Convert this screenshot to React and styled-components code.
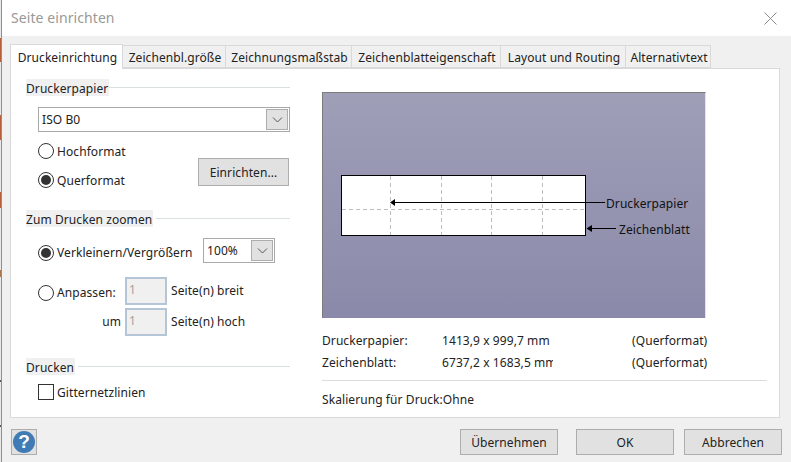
import React from 'react';
import styled, { createGlobalStyle } from 'styled-components';

const GlobalStyle = createGlobalStyle`
    html, body {
        margin: 0;
        padding: 0;
        width: 791px;
        height: 462px;
        overflow: hidden;
        background: #f0f0f0;
    }
    * {
        box-sizing: border-box;
    }
`;

const Screen = styled.div`
    display: flex;
    width: 791px;
    height: 462px;
    font-family: "Noto Sans", "Open Sans", sans-serif;
    font-size: 12px;
    line-height: 16px;
    letter-spacing: 0.08px;
    color: #222;
`;

// behind the dialog: what is left of the window underneath
const BackdropEdge = styled.div`
    width: 2px;
    flex: none;
    border-right: 1px solid #8f8f8f;
    background: linear-gradient(
        to bottom,
        #e8e8e8 0 38px, #b5603a 38px 62px, #e8e8e8 62px 115px, #b5603a 115px 140px,
        #e8e8e8 140px 192px, #b5603a 192px 208px, #e8e8e8 208px 270px, #a9764e 270px 277px,
        #e8e8e8 277px 380px, #555 380px 382px, #e8e8e8 382px 425px, #555 425px 427px, #e8e8e8 427px 462px
    );
`;

const Dialog = styled.div`
    flex: 1;
    display: flex;
    flex-direction: column;
    min-width: 0;
    background: #f0f0f0;
`;

const TitleBar = styled.div`
    height: 36px;
    flex: none;
    display: flex;
    align-items: center;
    justify-content: space-between;
    padding: 0 14px 0 9px;
    background: #fff;
    font-size: 14px;
    color: #999;
`;

const Body = styled.div`
    flex: 1;
    display: flex;
    flex-direction: column;
    padding: 8px 0 0 8px;
`;

const TabRow = styled.div`
    display: flex;
    align-items: flex-end;
    height: 25px;
    position: relative;
    z-index: 1;
`;

const Tab = styled.div`
    width: ${(props) => props.$width}px;
    height: ${(props) => (props.$active ? 25 : 23)}px;
    margin-bottom: ${(props) => (props.$active ? 0 : 1)}px;
    padding: ${(props) => (props.$active ? 1 : 3)}px 0 0 2px;
    display: flex;
    align-items: center;
    justify-content: center;
    white-space: nowrap;
    background: ${(props) => (props.$active ? '#fff' : '#f0f0f0')};
    border: 1px solid #d9d9d9;
    border-left: ${(props) => (props.$active ? '1px solid #d9d9d9' : 'none')};
    border-bottom: ${(props) => (props.$active ? 'none' : '1px solid #d9d9d9')};
    color: #222;
`;

const Panel = styled.div`
    width: 770px;
    height: 350px;
    margin-top: -1px;
    display: flex;
    background: #fff;
    border: 1px solid #d9d9d9;
`;

const LeftColumn = styled.div`
    width: 264px;
    margin-left: 15px;
    padding-top: 10px;
    flex: none;
`;

const RightColumn = styled.div`
    width: 445px;
    margin-left: 32px;
    padding-top: 23px;
    flex: none;
`;

const GroupHeading = styled.div`
    display: flex;
    align-items: center;
    gap: ${(props) => props.$gap ?? 3}px;
    height: 17px;
    margin-top: ${(props) => props.$top ?? 0}px;

    span {
        background: #f0f0f0;
        height: 17px;
        line-height: 19px;
        padding-right: 1px;
        white-space: nowrap;
    }

    &::after {
        content: '';
        flex: 1;
        height: 1px;
        background: #dadfe2;
    }
`;

const Group = styled.div`
    padding-left: 12px;
`;

const SelectBox = styled.div`
    display: flex;
    align-items: center;
    justify-content: space-between;
    width: ${(props) => props.$width}px;
    height: 25px;
    margin-top: ${(props) => props.$top ?? 0}px;
    padding: 1px 1px 1px 3px;
    background: #fff;
    border: 1px solid #a9a9a9;
    flex: none;
`;

const SelectValue = styled.span`
    padding-top: 1px;
`;

const SelectArrow = styled.div`
    width: 22px;
    height: 21px;
    display: flex;
    align-items: center;
    justify-content: center;
    background: #e1e1e1;
    border: 1px solid #adadad;
`;

const PaperRow = styled.div`
    display: flex;
    justify-content: space-between;
    align-items: flex-end;
    margin-top: 11px;
    padding-right: 1px;
`;

const RadioStack = styled.div`
    display: flex;
    flex-direction: column;
    gap: 13px;
`;

const Choice = styled.label`
    display: flex;
    align-items: center;
    gap: 3px;
    height: 16px;
    margin-top: ${(props) => props.$top ?? 0}px;
    white-space: nowrap;
`;

const ChoiceText = styled.span`
    padding-top: 1px;
`;

const RadioMark = styled.span`
    width: 16px;
    height: 16px;
    flex: none;
    display: flex;
    align-items: center;
    justify-content: center;
    border: 1px solid #333;
    border-radius: 50%;
    background: #fff;

    &::after {
        content: '';
        display: ${(props) => (props.$checked ? 'block' : 'none')};
        width: 10px;
        height: 10px;
        border-radius: 50%;
        background: #333;
    }
`;

const CheckMark = styled.span`
    width: 16px;
    height: 16px;
    flex: none;
    border: 1px solid #333;
    background: #fff;
`;

const Button = styled.div`
    width: ${(props) => props.$width ?? 98}px;
    height: ${(props) => props.$height ?? 26}px;
    margin-bottom: ${(props) => props.$bottom ?? 0}px;
    margin-left: ${(props) => props.$left ?? 0}px;
    padding-top: 1px;
    display: flex;
    align-items: center;
    justify-content: center;
    background: #e1e1e1;
    border: 1px solid #adadad;
    color: #222;
    flex: none;
`;

const ZoomRow = styled.div`
    display: flex;
    align-items: center;
    justify-content: space-between;
    width: 237px;
    margin-top: 11px;
`;

const FitRows = styled.div`
    display: flex;
    flex-direction: column;
    gap: 3px;
    margin-top: 14px;
`;

const FitRow = styled.div`
    display: flex;
    align-items: center;
    height: 28px;
`;

const FitLead = styled.div`
    width: 87px;
    flex: none;
    display: flex;
    justify-content: ${(props) => (props.$right ? 'flex-end' : 'flex-start')};
    padding-right: ${(props) => (props.$right ? 4 : 0)}px;
`;

const PageInput = styled.div`
    width: 42px;
    height: 28px;
    flex: none;
    padding: 3px 0 0 2px;
    background: #f0f0f0;
    border: 2px solid #b4c6d6;
    color: #a0a0a0;
`;

const FitText = styled.span`
    margin-left: 4px;
    white-space: nowrap;
`;

const Preview = styled.div`
    position: relative;
    width: 384px;
    height: 226px;
    background: linear-gradient(to bottom, #a09fb8, #8a89a9);
    border-top: 1px solid #7c7c7c;
    border-left: 1px solid #7c7c7c;
    border-right: 1px solid #e4e4e4;
`;

const PreviewDrawing = styled.svg`
    display: block;
`;

const PreviewLabel = styled.span`
    position: absolute;
    left: ${(props) => props.$left}px;
    top: ${(props) => props.$top}px;
    color: #111;
    white-space: nowrap;
`;

const InfoRows = styled.div`
    display: flex;
    flex-direction: column;
    gap: 6px;
    margin-top: 15px;
`;

const InfoRow = styled.div`
    display: grid;
    grid-template-columns: 120px 190px 1fr;
    white-space: nowrap;
`;

const InfoSize = styled.span`
    width: 111px;
    overflow: hidden;
`;

const Divider = styled.div`
    height: 1px;
    margin-top: 9px;
    background: #dcdcdc;
`;

const ScaleNote = styled.div`
    margin-top: 11px;
`;

const Footer = styled.div`
    display: flex;
    align-items: flex-start;
    padding: 11px 0 0 1px;
`;

const HelpButton = styled.div`
    width: 26px;
    height: 26px;
    display: flex;
    align-items: center;
    justify-content: center;
    background: #e1e1e1;
    border: 1px solid #adadad;
`;

const HelpCircle = styled.div`
    width: 22px;
    height: 22px;
    display: flex;
    align-items: center;
    justify-content: center;
    border-radius: 50%;
    background: #3f7cb6;
    color: #fff;
    font-family: "Liberation Sans", sans-serif;
    font-size: 19px;
    font-weight: 700;
`;

const FooterButtons = styled.div`
    display: flex;
    margin-left: 423px;
`;

const Chevron = () => (
    <svg width="11" height="6" viewBox="0 0 11 6">
        <path d="M1 0.5 L5.5 5 L10 0.5" fill="none" stroke="#555" strokeWidth="1" />
    </svg>
);

const tabs = [
    { label: 'Druckeinrichtung', width: 113, active: true },
    { label: 'Zeichenbl.größe', width: 103 },
    { label: 'Zeichnungsmaßstab', width: 126 },
    { label: 'Zeichenblatteigenschaft', width: 149 },
    { label: 'Layout und Routing', width: 125 },
    { label: 'Alternativtext', width: 85 },
];

const App = () => (
    <Screen>
        <GlobalStyle />
        <BackdropEdge />
        <Dialog>
            <TitleBar>
                <span>Seite einrichten</span>
                <svg width="13" height="13" viewBox="0 0 13 13">
                    <path d="M0.5 0.5 L12.5 12.5 M12.5 0.5 L0.5 12.5" stroke="#8c8c8c" strokeWidth="1" fill="none" />
                </svg>
            </TitleBar>
            <Body>
                <TabRow>
                    {tabs.map((tab) => (
                        <Tab key={tab.label} $width={tab.width} $active={tab.active}>{tab.label}</Tab>
                    ))}
                </TabRow>
                <Panel>
                    <LeftColumn>
                        <GroupHeading $gap={0}><span>Druckerpapier</span></GroupHeading>
                        <Group>
                            <SelectBox $width={252} $top={11}>
                                <SelectValue>ISO B0</SelectValue>
                                <SelectArrow><Chevron /></SelectArrow>
                            </SelectBox>
                            <PaperRow>
                                <RadioStack>
                                    <Choice><RadioMark /><ChoiceText>Hochformat</ChoiceText></Choice>
                                    <Choice><RadioMark $checked /><ChoiceText>Querformat</ChoiceText></Choice>
                                </RadioStack>
                                <Button $width={91} $height={28} $bottom={2}>Einrichten...</Button>
                            </PaperRow>
                        </Group>

                        <GroupHeading $top={22}><span>Zum Drucken zoomen</span></GroupHeading>
                        <Group>
                            <ZoomRow>
                                <Choice $top={4}><RadioMark $checked /><ChoiceText>Verkleinern/Vergrößern</ChoiceText></Choice>
                                <SelectBox $width={72}>
                                    <SelectValue>100%</SelectValue>
                                    <SelectArrow><Chevron /></SelectArrow>
                                </SelectBox>
                            </ZoomRow>
                            <FitRows>
                                <FitRow>
                                    <FitLead><Choice $top={3}><RadioMark /><ChoiceText>Anpassen:</ChoiceText></Choice></FitLead>
                                    <PageInput>1</PageInput>
                                    <FitText>Seite(n) breit</FitText>
                                </FitRow>
                                <FitRow>
                                    <FitLead $right>um</FitLead>
                                    <PageInput>1</PageInput>
                                    <FitText>Seite(n) hoch</FitText>
                                </FitRow>
                            </FitRows>
                        </Group>

                        <GroupHeading $top={22}><span>Drucken</span></GroupHeading>
                        <Group>
                            <Choice $top={9}><CheckMark /><ChoiceText>Gitternetzlinien</ChoiceText></Choice>
                        </Group>
                    </LeftColumn>

                    <RightColumn>
                        <Preview>
                            <PreviewDrawing width="383" height="225" viewBox="0 0 383 225">
                                <rect x="18.5" y="82.5" width="244" height="60" fill="#fff" stroke="#000" />
                                <path
                                    d="M67.5 83 V142 M118.5 83 V142 M168.5 83 V142 M219.5 83 V142 M19 116.5 H262"
                                    stroke="#bdbdbd"
                                    strokeDasharray="4 3"
                                    fill="none"
                                />
                                <path d="M70 109.5 H282 M269 135.5 H293" stroke="#000" fill="none" />
                                <path d="M67 109.5 L72 106 V113 Z M263.5 135.5 L269 132 V139 Z" fill="#000" />
                            </PreviewDrawing>
                            <PreviewLabel $left={283} $top={103}>Druckerpapier</PreviewLabel>
                            <PreviewLabel $left={296} $top={129}>Zeichenblatt</PreviewLabel>
                        </Preview>
                        <InfoRows>
                            <InfoRow>
                                <span>Druckerpapier:</span>
                                <InfoSize>1413,9 x 999,7 mm</InfoSize>
                                <span>(Querformat)</span>
                            </InfoRow>
                            <InfoRow>
                                <span>Zeichenblatt:</span>
                                <InfoSize>6737,2 x 1683,5 mm</InfoSize>
                                <span>(Querformat)</span>
                            </InfoRow>
                        </InfoRows>
                        <Divider />
                        <ScaleNote>Skalierung für Druck:Ohne</ScaleNote>
                    </RightColumn>
                </Panel>
                <Footer>
                    <HelpButton><HelpCircle>?</HelpCircle></HelpButton>
                    <FooterButtons>
                        <Button>Übernehmen</Button>
                        <Button $left={18}>OK</Button>
                        <Button $left={10}>Abbrechen</Button>
                    </FooterButtons>
                </Footer>
            </Body>
        </Dialog>
    </Screen>
);

export default App;
